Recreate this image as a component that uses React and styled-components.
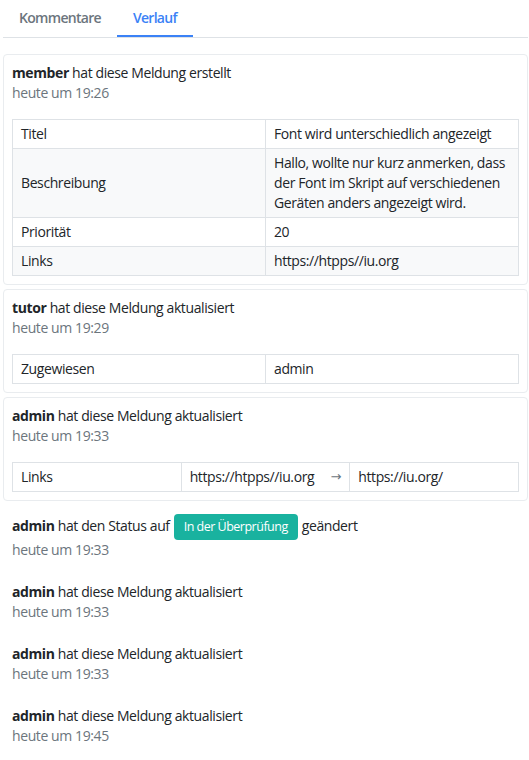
import styled, { createGlobalStyle } from "styled-components";

const GlobalStyle = createGlobalStyle`
  body {
    margin: 0;
    background: #fff;
    font-family: "Open Sans", "Noto Sans", sans-serif;
    font-size: 14px;
    line-height: 20px;
    letter-spacing: -0.4px;
    color: #212529;
  }
`;

const Page = styled.div`
  padding: 0 1px 0 3px;
`;

const TabBar = styled.div`
  display: flex;
  border-bottom: 1px solid #dee2e6;
`;

const Tab = styled.button`
  background: none;
  border: none;
  border-bottom: 2px solid ${(p) => (p.$active ? "#3b82f6" : "transparent")};
  padding: 8px 16px 7px;
  font-family: inherit;
  font-size: 14px;
  line-height: 20px;
  letter-spacing: -0.7px;
  font-weight: 600;
  color: ${(p) => (p.$active ? "#3b82f6" : "#6c757d")};
  cursor: pointer;
`;

const Feed = styled.div`
  display: flex;
  flex-direction: column;
  gap: 4px;
  margin-top: 16px;
`;

const Entry = styled.div`
  border: 1px solid ${(p) => (p.$boxed ? "#e9ecef" : "transparent")};
  border-radius: 4px;
  padding: 8px;
`;

const Title = styled.div`
  & strong {
    font-weight: 700;
  }
`;

const Time = styled.div`
  color: #6c757d;
`;

const Table = styled.table`
  width: 100%;
  margin-top: 16px;
  border-collapse: collapse;
  table-layout: fixed;
`;

const Cell = styled.td`
  border: 1px solid #dee2e6;
  padding: 4px 8px;
  vertical-align: middle;
  background: ${(p) => (p.$striped ? "#f8f9fa" : "#fff")};
`;

const Change = styled.div`
  display: flex;
  justify-content: space-between;
  align-items: center;
`;

const Arrow = styled.span`
  color: #6c757d;
  font-family: "DejaVu Sans", sans-serif;
  font-size: 13px;
  letter-spacing: 0;
`;

const Badge = styled.span`
  display: inline-block;
  vertical-align: middle;
  margin: 0 4px;
  padding: 3px 10px;
  border-radius: 4px;
  background: #19b29f;
  color: #fff;
  font-size: 12.5px;
  letter-spacing: -0.5px;
  line-height: 20px;
`;

const createdRows = [
  ["Titel", "Font wird unterschiedlich angezeigt"],
  [
    "Beschreibung",
    "Hallo, wollte nur kurz anmerken, dass der Font im Skript auf verschiedenen Geräten anders angezeigt wird.",
  ],
  ["Priorität", "20"],
  ["Links", "https://htpps//iu.org"],
];

function KeyValueTable({ rows }) {
  return (
    <Table>
      <tbody>
        {rows.map(([key, value], i) => (
          <tr key={key}>
            <Cell $striped={i % 2 === 1}>{key}</Cell>
            <Cell $striped={i % 2 === 1}>{value}</Cell>
          </tr>
        ))}
      </tbody>
    </Table>
  );
}

function EntryHead({ user, children, time }) {
  return (
    <>
      <Title>
        <strong>{user}</strong> {children}
      </Title>
      <Time>heute um {time}</Time>
    </>
  );
}

export default function App() {
  return (
    <Page>
      <GlobalStyle />
      <TabBar>
        <Tab>Kommentare</Tab>
        <Tab $active>Verlauf</Tab>
      </TabBar>
      <Feed>
        <Entry $boxed>
          <EntryHead user="member" time="19:26">
            hat diese Meldung erstellt
          </EntryHead>
          <KeyValueTable rows={createdRows} />
        </Entry>
        <Entry $boxed>
          <EntryHead user="tutor" time="19:29">
            hat diese Meldung aktualisiert
          </EntryHead>
          <KeyValueTable rows={[["Zugewiesen", "admin"]]} />
        </Entry>
        <Entry $boxed>
          <EntryHead user="admin" time="19:33">
            hat diese Meldung aktualisiert
          </EntryHead>
          <Table>
            <tbody>
              <tr>
                <Cell>Links</Cell>
                <Cell>
                  <Change>
                    https://htpps//iu.org
                    <Arrow>→</Arrow>
                  </Change>
                </Cell>
                <Cell>https://iu.org/</Cell>
              </tr>
            </tbody>
          </Table>
        </Entry>
        <Entry>
          <EntryHead user="admin" time="19:33">
            hat den Status auf<Badge>In der Überprüfung</Badge>geändert
          </EntryHead>
        </Entry>
        <Entry>
          <EntryHead user="admin" time="19:33">
            hat diese Meldung aktualisiert
          </EntryHead>
        </Entry>
        <Entry>
          <EntryHead user="admin" time="19:33">
            hat diese Meldung aktualisiert
          </EntryHead>
        </Entry>
        <Entry>
          <EntryHead user="admin" time="19:45">
            hat diese Meldung aktualisiert
          </EntryHead>
        </Entry>
      </Feed>
    </Page>
  );
}
